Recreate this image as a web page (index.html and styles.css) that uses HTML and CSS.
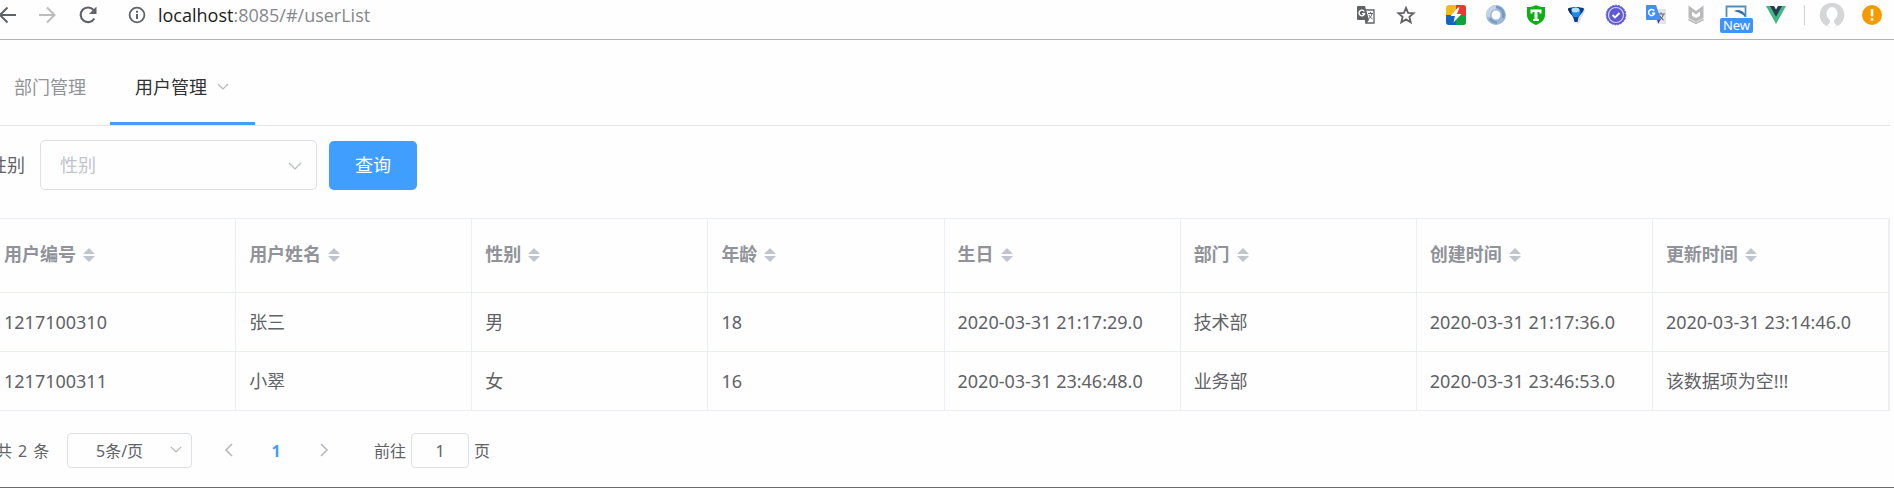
FILE: index.html
```html
<!DOCTYPE html>
<html lang="zh-CN">
<head>
<meta charset="utf-8">
<meta name="viewport" content="width=device-width, initial-scale=1">
<title>用户管理</title>
<link rel="stylesheet" href="styles.css">
</head>
<body>
<header class="toolbar">
  <div class="nav-buttons">
    <button class="tool" aria-label="后退"><svg width="20" height="20" viewBox="0 0 20 20" fill="none" stroke="#5f6368" stroke-width="2"><path d="M19 10H3M10.500 2.500L3 10l7.500 7.500"/></svg></button>
    <button class="tool" aria-label="前进"><svg width="20" height="20" viewBox="0 0 20 20" fill="none" stroke="#babcbe" stroke-width="2"><path d="M1 10h15M9 2.500L16.500 10 9 17.500"/></svg></button>
    <button class="tool" aria-label="刷新"><svg width="20" height="20" viewBox="0 0 20 20"><path d="M15.300 13.500A7.300 7.300 0 1 1 14.500 5" fill="none" stroke="#5f6368" stroke-width="2.200"/><path d="M17.500 1.500V9H10z" fill="#5f6368"/></svg></button>
  </div>
  <div class="address">
    <svg width="18" height="18" viewBox="0 0 18 18"><circle cx="9" cy="9" r="7.400" fill="none" stroke="#5f6368" stroke-width="1.800"/><path d="M8 8h2v5H8zM8 4.800h2v2H8z" fill="#5f6368"/></svg>
    <span class="url"><span class="host">localhost</span>:8085/#/userList</span>
  </div>
  <div class="extensions">
    <button class="tool" aria-label="翻译此页"><svg width="20" height="20" viewBox="0 0 20 20"><path d="M9 5h9v13H10z" fill="#fff" stroke="#5f6368" stroke-width="1.300"/><path d="M2 1h7l4 14H2a1 1 0 0 1-1-1V2a1 1 0 0 1 1-1zM9 15h4l-3 4z" fill="#5f6368"/><path d="M8.300 6.500A2.800 2.800 0 1 0 8.600 8.600H6" fill="none" stroke="#fff" stroke-width="1.400"/><path d="M12 8.500h5M14.500 7v1.500M16 8.500c-.5 2.500-1.500 4-3.500 5.500M13 10c.8 2 2 3 3.500 4" fill="none" stroke="#5f6368"/></svg></button>
    <button class="tool" aria-label="收藏"><svg width="20" height="20" viewBox="0 0 20 20"><path d="M10 2.800l2.100 5.100 5.500.4-4.200 3.600 1.300 5.400L10 14.400l-4.700 2.900 1.300-5.400-4.200-3.600 5.500-.4z" fill="none" stroke="#5f6368" stroke-width="1.800"/></svg></button>
    <button class="tool tool-first" aria-label="闪电"><svg width="22" height="22" viewBox="0 0 22 22"><rect x="1" y="1" width="20" height="20" rx="3" fill="#f5bb16"/><path d="M11 1h7a3 3 0 0 1 3 3v7H11z" fill="#e53935"/><path d="M11 11h10v7a3 3 0 0 1-3 3h-7z" fill="#12a03c"/><path d="M1 11h10v10H4a3 3 0 0 1-3-3z" fill="#1565c0"/><path d="M13 3.500L5.500 12H10l-1.500 6.500L16.500 10H12l2.500-6.500z" fill="#fff"/></svg></button>
    <button class="tool" aria-label="圆环"><svg width="22" height="22" viewBox="0 0 22 22" fill="none"><circle cx="11" cy="11" r="7.200" stroke="#9db8d6" stroke-width="5.500"/><path d="M3.500 13A7.500 7.500 0 0 1 12 3.500" stroke="#c3d3e5" stroke-width="4"/><path d="M11 3A8 8 0 0 1 18 14M12 18.500A8 8 0 0 1 5 14.500" stroke="#7699c2" stroke-width="2.500"/></svg></button>
    <button class="tool" aria-label="盾牌"><svg width="20" height="22" viewBox="0 0 20 22"><path d="M10 1c3 1.800 6 2.300 9 2v8c0 5-4 8-9 10-5-2-9-5-9-10V3c3 .3 6-.2 9-2z" fill="#0db014"/><path d="M4.500 5.500h11v4h-2v-1.500h-2v7H13v2H7v-2h1.500V8h-2v1.500h-2z" fill="#fff"/></svg></button>
    <button class="tool" aria-label="水滴"><svg width="20" height="20" viewBox="0 0 20 20"><path d="M3 5l8 14 2-1 6-12-1-3z" fill="#dedede"/><path d="M2 3.500C6 1.500 14 1.500 18 3.500c0 3-3 5-5.500 9L11.500 17h-3l-1-4.500C5 8.500 2 6.500 2 3.500z" fill="#0a3f94"/><path d="M2 3.500l2.500.5L8 12.500l.5 4.500-1-4.500C5 8.500 2 6.500 2 3.500z" fill="#102d5c"/><ellipse cx="10" cy="7.500" rx="4.500" ry="5" fill="#1e88e5"/><ellipse cx="9.500" cy="5" rx="4" ry="2.500" fill="#b4e0ff"/></svg></button>
    <button class="tool" aria-label="徽章"><svg width="22" height="22" viewBox="0 0 22 22" fill="none"><circle cx="11" cy="11" r="9.800" fill="#5d5bd0" stroke="#5d5bd0" stroke-dasharray="2 1"/><circle cx="11" cy="11" r="7.500" stroke="#d2d1f7" stroke-width="1.200"/><path d="M7.500 11l2.500 2.500 4.500-4.500" stroke="#fff" stroke-width="1.800"/></svg></button>
    <button class="tool" aria-label="谷歌翻译"><svg width="22" height="22" viewBox="0 0 22 22"><path d="M11 5h10v15H14z" fill="#e4e4e4"/><path d="M12 15h4l-3 5z" fill="#3442ae"/><path d="M2 1h9l5 15H2a1 1 0 0 1-1-1V2a1 1 0 0 1 1-1z" fill="#4090f7"/><path d="M9.200 7A3 3 0 1 0 9.500 9.300H7" fill="none" stroke="#fff" stroke-width="1.500"/><path d="M13 10h7M16 8.500V10M18.500 10c-.5 3-2 4.500-4 6M14.500 11.500c1 2.500 2.500 3.500 4 4.500" fill="none" stroke="#666c78" stroke-width="1.200"/></svg></button>
    <button class="tool" aria-label="网络防护"><svg width="20" height="22" viewBox="0 0 20 22"><path d="M2.500 1.500L10 7l7.500-5.500v12.500L10 18l-7.500-4zM6 7.500v4.500l4 2 4-2V7.500L10 10.500z" fill="#b8babd" fill-rule="evenodd"/><path d="M2.500 15.500l7.500 4 7.500-4" fill="none" stroke="#b8babd" stroke-width="1.500"/></svg></button>
    <button class="tool tool-new" aria-label="新扩展"><svg width="22" height="22" viewBox="0 0 22 22"><path d="M1.500 13V2.500h19V13" fill="#fff" stroke="#5090bd" stroke-width="1.800"/><path d="M9 7c4-2 8-1 11 3v3c-2-3-5-4-11-6z" fill="#32749f"/></svg><span class="badge">New</span></button>
    <button class="tool" aria-label="Vue"><svg width="20" height="20" viewBox="0 0 20 20"><path d="M0 1h5l5 9 5-9h5L10 19z" fill="#41b883"/><path d="M4 1h4l2 3.500L12 1h4L10 11.800z" fill="#283b55"/></svg></button>
    <span class="divider"></span>
    <button class="tool" aria-label="用户"><svg width="26" height="26" viewBox="0 0 26 26"><circle cx="13" cy="13" r="12.300" fill="#d5d6d7"/><path d="M13 5a5.500 6.500 0 0 0-5.500 6.500c0 3 1.500 5 3.500 6.500v2l-3 4.300a12 12 0 0 0 10 0L15 20v-2c2-1.500 3.500-3.500 3.500-6.500A5.500 6.500 0 0 0 13 5z" fill="#fff"/></svg></button>
    <button class="tool" aria-label="更新"><svg width="20" height="20" viewBox="0 0 20 20"><circle cx="10" cy="10" r="10" fill="#f59b00"/><path d="M8.800 4h2.500v7.500H8.800zM8.800 13.200h2.500v2.500H8.800z" fill="#fff"/></svg></button>
  </div>
</header>

<main class="page">
  <nav class="tabs">
    <a class="tab" href="#/deptList">部门管理</a>
    <a class="tab tab-active" href="#/userList">用户管理
      <svg class="tab-arrow" width="12" height="8" viewBox="0 0 12 8"><path d="M1 1l5 5 5-5"/></svg></a>
  </nav>

  <form class="filter">
    <label class="filter-label" for="sex">性别</label>
    <div class="select-box">
      <select class="select" id="sex"><option>性别</option><option>男</option><option>女</option></select>
      <svg class="select-arrow" width="14" height="8" viewBox="0 0 14 8"><path d="M1 1l6 6 6-6"/></svg>
    </div>
    <button class="query" type="button">查询</button>
  </form>

  <div class="table-box">
    <table class="table">
      <thead>
        <tr>
          <th>用户编号<svg class="sort" width="12" height="14" viewBox="0 0 12 14"><path d="M6 0l6 6H0zM0 8h12l-6 6z"/></svg></th>
          <th>用户姓名<svg class="sort" width="12" height="14" viewBox="0 0 12 14"><path d="M6 0l6 6H0zM0 8h12l-6 6z"/></svg></th>
          <th>性别<svg class="sort" width="12" height="14" viewBox="0 0 12 14"><path d="M6 0l6 6H0zM0 8h12l-6 6z"/></svg></th>
          <th>年龄<svg class="sort" width="12" height="14" viewBox="0 0 12 14"><path d="M6 0l6 6H0zM0 8h12l-6 6z"/></svg></th>
          <th>生日<svg class="sort" width="12" height="14" viewBox="0 0 12 14"><path d="M6 0l6 6H0zM0 8h12l-6 6z"/></svg></th>
          <th>部门<svg class="sort" width="12" height="14" viewBox="0 0 12 14"><path d="M6 0l6 6H0zM0 8h12l-6 6z"/></svg></th>
          <th>创建时间<svg class="sort" width="12" height="14" viewBox="0 0 12 14"><path d="M6 0l6 6H0zM0 8h12l-6 6z"/></svg></th>
          <th>更新时间<svg class="sort" width="12" height="14" viewBox="0 0 12 14"><path d="M6 0l6 6H0zM0 8h12l-6 6z"/></svg></th>
        </tr>
      </thead>
      <tbody>
        <tr><td>1217100310</td><td>张三</td><td>男</td><td>18</td><td>2020-03-31 21:17:29.0</td><td>技术部</td><td>2020-03-31 21:17:36.0</td><td>2020-03-31 23:14:46.0</td></tr>
        <tr><td>1217100311</td><td>小翠</td><td>女</td><td>16</td><td>2020-03-31 23:46:48.0</td><td>业务部</td><td>2020-03-31 23:46:53.0</td><td>该数据项为空!!!</td></tr>
      </tbody>
    </table>
  </div>

  <div class="pagination">
    <span class="total"><span>共</span><span>2</span><span>条</span></span>
    <div class="size-box">
      <select class="size" aria-label="每页条数"><option>5条/页</option><option>10条/页</option></select>
      <svg class="size-arrow" width="12" height="8" viewBox="0 0 12 8"><path d="M1 1l5 5 5-5"/></svg>
    </div>
    <div class="pager">
      <button class="page-button" aria-label="上一页"><svg width="9" height="14" viewBox="0 0 9 14"><path d="M8 1L2 7l6 6"/></svg></button>
      <button class="page-button page-current">1</button>
      <button class="page-button" aria-label="下一页"><svg width="9" height="14" viewBox="0 0 9 14"><path d="M1 1l6 6-6 6"/></svg></button>
    </div>
    <label class="jump">前往 <input class="jump-input" type="text" value="1"> 页</label>
  </div>
</main>
</body>
</html>
```
FILE: styles.css
```css
* {
  box-sizing: border-box;
}

body {
  margin: 0;
  min-height: 100vh;
  display: flex;
  flex-direction: column;
  overflow-x: hidden;
  background: #fefefe;
  border-bottom: 1px solid #66686b;
  color: #606266;
  font-family: "Noto Sans", "Noto Sans CJK SC", sans-serif;
  font-size: 18px;
  line-height: 24px;
}

button,
select,
input {
  margin: 0;
  padding: 0;
  border: 0;
  background: none;
  color: inherit;
  font: inherit;
}

/* Browser toolbar */
.toolbar {
  display: flex;
  align-items: center;
  height: 40px;
  padding: 0 2px 9px 0;
  border-bottom: 1px solid #b0b2b4;
}

.nav-buttons {
  display: flex;
  margin-left: -14px;
}

.tool {
  display: flex;
  flex: none;
  align-items: center;
  justify-content: center;
  width: 40px;
  height: 30px;
}

.nav-buttons .tool {
  width: 41px;
}

.address {
  display: flex;
  flex: 1;
  align-items: center;
  gap: 12px;
  margin-left: 19px;
}

.url {
  color: #85888c;
  font-family: "Open Sans", sans-serif;
  font-size: 18px;
}

.host {
  color: #202124;
}

.extensions {
  display: flex;
  align-items: center;
}

.tool-first {
  margin-left: 10px;
}

.tool-new {
  position: relative;
}

.badge {
  position: absolute;
  left: 4px;
  top: 18px;
  width: 33px;
  border-radius: 2px;
  background: #3f94fb;
  color: #fff;
  font-size: 13px;
  line-height: 15px;
  text-align: center;
}

.divider {
  width: 1px;
  height: 20px;
  margin: 0 7px 0 8px;
  background: #cfd1d4;
}

/* Tabs */
.page {
  flex: 1;
  padding-top: 9px;
}

.tabs {
  display: flex;
  height: 77px;
  margin-right: 4px;
  border-bottom: 1px solid #e6e6e6;
}

.tab {
  display: flex;
  align-items: center;
  padding: 3px 24px 0 14px;
  border-bottom: 3px solid transparent;
  color: #909399;
  text-decoration: none;
}

.tab-active {
  gap: 10px;
  padding: 3px 26px 0 25px;
  border-color: #409eff;
  color: #303133;
}

.tab-arrow,
.select-arrow,
.size-arrow,
.page-button svg {
  fill: none;
  stroke: #b4b8bf;
  stroke-width: 1.2;
}

/* Filter */
.filter {
  display: flex;
  align-items: center;
  gap: 12px;
  margin: 14px 0 28px -11px;
}

.filter-label {
  width: 39px;
}

.select-box,
.size-box {
  position: relative;
}

.select {
  width: 277px;
  height: 50px;
  padding-left: 19px;
  border: 1px solid #dcdfe6;
  border-radius: 5px;
  appearance: none;
  color: #c0c4cc;
}

.select-arrow {
  position: absolute;
  right: 15px;
  top: 22px;
  pointer-events: none;
}

.query {
  width: 88px;
  height: 49px;
  border-radius: 5px;
  background: #409eff;
  color: #fff;
}

/* Table */
.table-box {
  margin-right: 4px;
  border-top: 1px solid #ebeef5;
  border-right: 1px solid #ebeef5;
}

.table {
  width: 100%;
  border-collapse: separate;
  border-spacing: 0;
  table-layout: fixed;
}

.table th,
.table td {
  height: 59px;
  padding: 0 12px 0 13px;
  border-right: 1px solid #ebeef5;
  border-bottom: 1px solid #ebeef5;
  text-align: left;
  white-space: nowrap;
}

.table th {
  height: 74px;
  padding-bottom: 4px;
  color: #909399;
  font-weight: 700;
}

.table th:first-child,
.table td:first-child {
  padding-left: 4px;
}

.sort {
  margin-left: 7px;
  vertical-align: -1px;
  fill: #c0c4cc;
}

/* Pagination */
.pagination {
  display: flex;
  align-items: center;
  margin: 22px 0 19px -4px;
  font-size: 16px;
}

.total {
  display: flex;
  gap: 6px;
  width: 71px;
}

.size {
  width: 125px;
  height: 35px;
  padding-left: 28px;
  border: 1px solid #dcdfe6;
  border-radius: 4px;
  appearance: none;
}

.size-arrow {
  position: absolute;
  right: 10px;
  top: 13px;
  pointer-events: none;
}

.pager {
  display: flex;
  margin-left: 12px;
}

.page-button {
  width: 48px;
  height: 35px;
}

.page-button svg {
  stroke-width: 1.6;
}

.page-current {
  color: #409eff;
  font-weight: 700;
}

.jump {
  display: flex;
  align-items: center;
  gap: 5px;
  margin-left: 26px;
}

.jump-input {
  width: 58px;
  height: 35px;
  border: 1px solid #dcdfe6;
  border-radius: 4px;
  text-align: center;
}
```
